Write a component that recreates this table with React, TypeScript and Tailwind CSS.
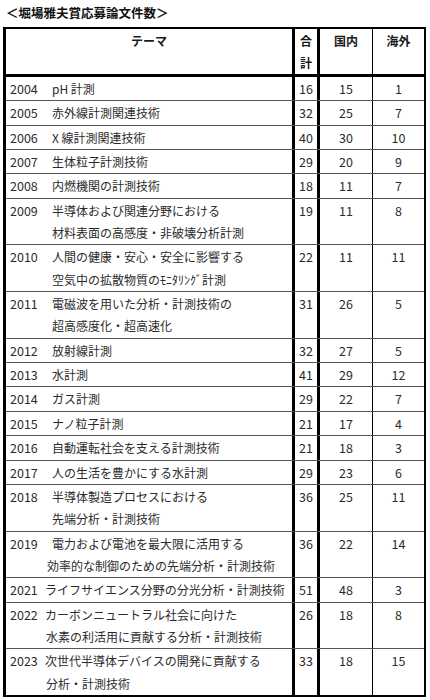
type Row = {
  year: string;
  lines: string[];
  total: number;
  domestic: number;
  overseas: number;
  yearW: string;
  indent2?: string;
};

const rows: Row[] = [
  { year: '2004', lines: ['pH 計測'], total: 16, domestic: 15, overseas: 1, yearW: 'w-[42px]' },
  { year: '2005', lines: ['赤外線計測関連技術'], total: 32, domestic: 25, overseas: 7, yearW: 'w-[42px]' },
  { year: '2006', lines: ['X 線計測関連技術'], total: 40, domestic: 30, overseas: 10, yearW: 'w-[42px]' },
  { year: '2007', lines: ['生体粒子計測技術'], total: 29, domestic: 20, overseas: 9, yearW: 'w-[42px]' },
  { year: '2008', lines: ['内燃機関の計測技術'], total: 18, domestic: 11, overseas: 7, yearW: 'w-[42px]' },
  {
    year: '2009',
    lines: ['半導体および関連分野における', '材料表面の高感度・非破壊分析計測'],
    total: 19,
    domestic: 11,
    overseas: 8,
    yearW: 'w-[42px]',
    indent2: 'pl-[42px]',
  },
  {
    year: '2010',
    lines: ['人間の健康・安心・安全に影響する', '空気中の拡散物質のﾓﾆﾀﾘﾝｸﾞ計測'],
    total: 22,
    domestic: 11,
    overseas: 11,
    yearW: 'w-[42px]',
    indent2: 'pl-[42px]',
  },
  {
    year: '2011',
    lines: ['電磁波を用いた分析・計測技術の', '超高感度化・超高速化'],
    total: 31,
    domestic: 26,
    overseas: 5,
    yearW: 'w-[42px]',
    indent2: 'pl-[42px]',
  },
  { year: '2012', lines: ['放射線計測'], total: 32, domestic: 27, overseas: 5, yearW: 'w-[42px]' },
  { year: '2013', lines: ['水計測'], total: 41, domestic: 29, overseas: 12, yearW: 'w-[42px]' },
  { year: '2014', lines: ['ガス計測'], total: 29, domestic: 22, overseas: 7, yearW: 'w-[42px]' },
  { year: '2015', lines: ['ナノ粒子計測'], total: 21, domestic: 17, overseas: 4, yearW: 'w-[42px]' },
  { year: '2016', lines: ['自動運転社会を支える計測技術'], total: 21, domestic: 18, overseas: 3, yearW: 'w-[42px]' },
  { year: '2017', lines: ['人の生活を豊かにする水計測'], total: 29, domestic: 23, overseas: 6, yearW: 'w-[42px]' },
  {
    year: '2018',
    lines: ['半導体製造プロセスにおける', '先端分析・計測技術'],
    total: 36,
    domestic: 25,
    overseas: 11,
    yearW: 'w-[42px]',
    indent2: 'pl-[42px]',
  },
  {
    year: '2019',
    lines: ['電力および電池を最大限に活用する', '効率的な制御のための先端分析・計測技術'],
    total: 36,
    domestic: 22,
    overseas: 14,
    yearW: 'w-[42px]',
    indent2: 'pl-[37px]',
  },
  {
    year: '2021',
    lines: ['ライフサイエンス分野の分光分析・計測技術'],
    total: 51,
    domestic: 48,
    overseas: 3,
    yearW: 'w-[35px]',
  },
  {
    year: '2022',
    lines: ['カーボンニュートラル社会に向けた', '水素の利活用に貢献する分析・計測技術'],
    total: 26,
    domestic: 18,
    overseas: 8,
    yearW: 'w-[35px]',
    indent2: 'pl-[36px]',
  },
  {
    year: '2023',
    lines: ['次世代半導体デバイスの開発に貢献する', '分析・計測技術'],
    total: 33,
    domestic: 18,
    overseas: 15,
    yearW: 'w-[35px]',
    indent2: 'pl-[36px]',
  },
];

export default function App() {
  return (
    <div className="w-[430px] h-[700px] bg-white pl-[3px] font-['Noto_Sans_CJK_JP',sans-serif] text-[#2b2b2b]">
      <div className="h-[27px] pl-[3px] pt-[3px] text-[12.5px] leading-[20px] font-bold text-[#111]">
        ＜堀場雅夫賞応募論文件数＞
      </div>

      <div className="w-[423px] border-t-2 border-l-[3px] border-r-2 border-b-2 border-black">
        {/* Header */}
        <div className="grid grid-cols-[289px_25px_53px_1fr] h-[48px] border-b-[3px] border-black text-[12px] leading-[22.35px] font-bold text-[#1a1a1a]">
          <div className="border-r-[3px] border-black text-center pt-[1px]">テーマ</div>
          <div className="border-r-[3px] border-black text-center pt-[1px]">
            <div>合</div>
            <div>計</div>
          </div>
          <div className="border-r border-black text-center pt-[1px]">国内</div>
          <div className="text-center pt-[1px]">海外</div>
        </div>

        {/* Body */}
        {rows.map((row, i) => (
          <div
            key={row.year}
            className={`grid grid-cols-[289px_25px_53px_1fr] leading-[22.35px] ${
              i < rows.length - 1 ? 'border-b border-[#555]' : ''
            }`}
          >
            <div className="border-r-[3px] border-black pl-[4px] pt-[1px] text-[12px] whitespace-nowrap">
              <div className="flex">
                <span className={`${row.yearW} shrink-0 text-[12.5px]`}>{row.year}</span>
                <span>{row.lines[0]}</span>
              </div>
              {row.lines[1] && <div className={row.indent2}>{row.lines[1]}</div>}
            </div>
            <div className="border-r-[3px] border-black text-center pt-[1px] text-[12.5px]">{row.total}</div>
            <div className="border-r border-black text-center pt-[1px] text-[12.5px]">{row.domestic}</div>
            <div className="text-center pt-[1px] text-[12.5px]">{row.overseas}</div>
          </div>
        ))}
      </div>
    </div>
  );
}
